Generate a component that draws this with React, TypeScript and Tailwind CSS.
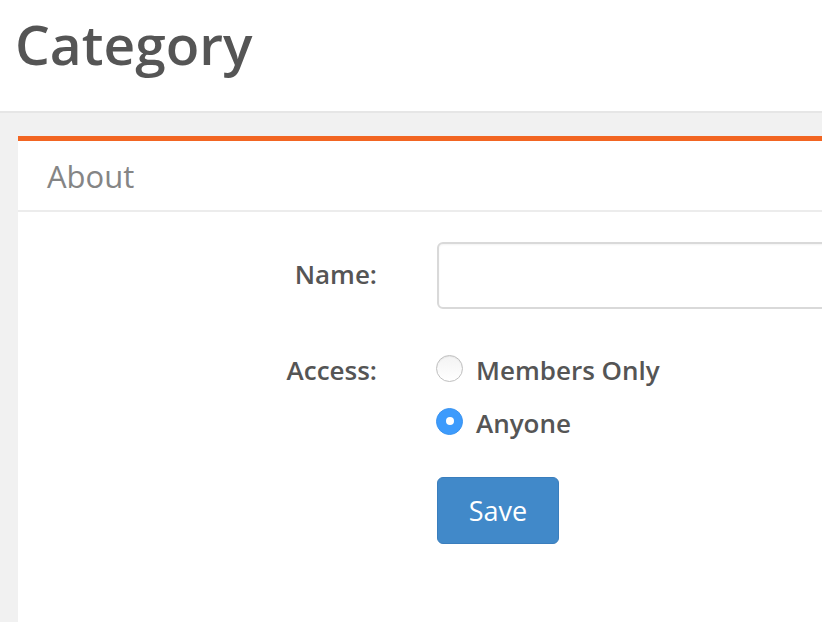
import { useState } from "react";

const OPTIONS = [
  { id: "members", label: "Members Only" },
  { id: "anyone", label: "Anyone" },
];

function Radio({ checked }: { checked: boolean }) {
  return checked ? (
    <span className="w-[27px] h-[27px] rounded-full bg-[#3d9bfc] border border-[#3a93f0] flex items-center justify-center shrink-0">
      <span className="block w-[8px] h-[8px] rounded-full bg-white" />
    </span>
  ) : (
    <span className="block w-[27px] h-[27px] rounded-full bg-gradient-to-b from-[#f3f3f3] to-white border-[1.5px] border-[#bfbfbf] shadow-[inset_0_1px_1px_rgba(0,0,0,0.06)] shrink-0" />
  );
}

export default function App() {
  const [access, setAccess] = useState("anyone");
  const [name, setName] = useState("");

  return (
    <div className="min-h-screen w-full overflow-hidden bg-[#f1f1f1] font-['Open_Sans',sans-serif]">
      {/* Page title */}
      <div className="bg-white border-b-2 border-[#e6e6e6] pt-[16px] pb-[40px] pl-[15px]">
        <h1 className="text-[55px] leading-none font-semibold text-[#555555]">Category</h1>
      </div>

      {/* Card */}
      <div className="ml-[18px] mt-[23px] w-[1000px] bg-white border-t-[5px] border-[#f26522] min-h-[500px]">
        <div className="border-b-2 border-[#ececec] pt-[20px] pb-[18px] pl-[29px]">
          <h2 className="text-[31px] leading-none text-[#858585]">About</h2>
        </div>

        <div className="pt-[30px] flex flex-col">
          <div className="flex items-center gap-[60px]">
            <label className="w-[359px] text-right text-[26px] font-semibold text-[#555555] pb-[3px]">Name:</label>
            <input
              value={name}
              onChange={e => setName(e.target.value)}
              className="w-[540px] h-[67px] rounded-[6px] border-2 border-[#d9d9d9] bg-white px-4 text-[22px] text-[#555] outline-none shadow-[inset_0_1px_2px_rgba(0,0,0,0.05)]"
            />
          </div>

          <div className="flex gap-[60px] mt-[39px]">
            <div className="w-[359px] h-[40px] flex items-center justify-end pt-[4px] text-[26px] font-semibold text-[#555555]">Access:</div>
            <div className="flex flex-col gap-[13px]">
              {OPTIONS.map(o => (
                <button
                  key={o.id}
                  onClick={() => setAccess(o.id)}
                  className="h-[40px] flex items-center gap-[13px] text-[26px] font-semibold text-[#555555] cursor-pointer"
                >
                  <span className="-ml-[1px]"><Radio checked={access === o.id} /></span>
                  <span className="pt-[4px]">{o.label}</span>
                </button>
              ))}
            </div>
          </div>

          <div className="pl-[419px] mt-[36px]">
            <button className="w-[122px] h-[67px] rounded-[6px] bg-[#4189c9] border border-[#3a7ebd] text-white text-[27px] leading-none">
              Save
            </button>
          </div>
        </div>
      </div>
    </div>
  );
}
